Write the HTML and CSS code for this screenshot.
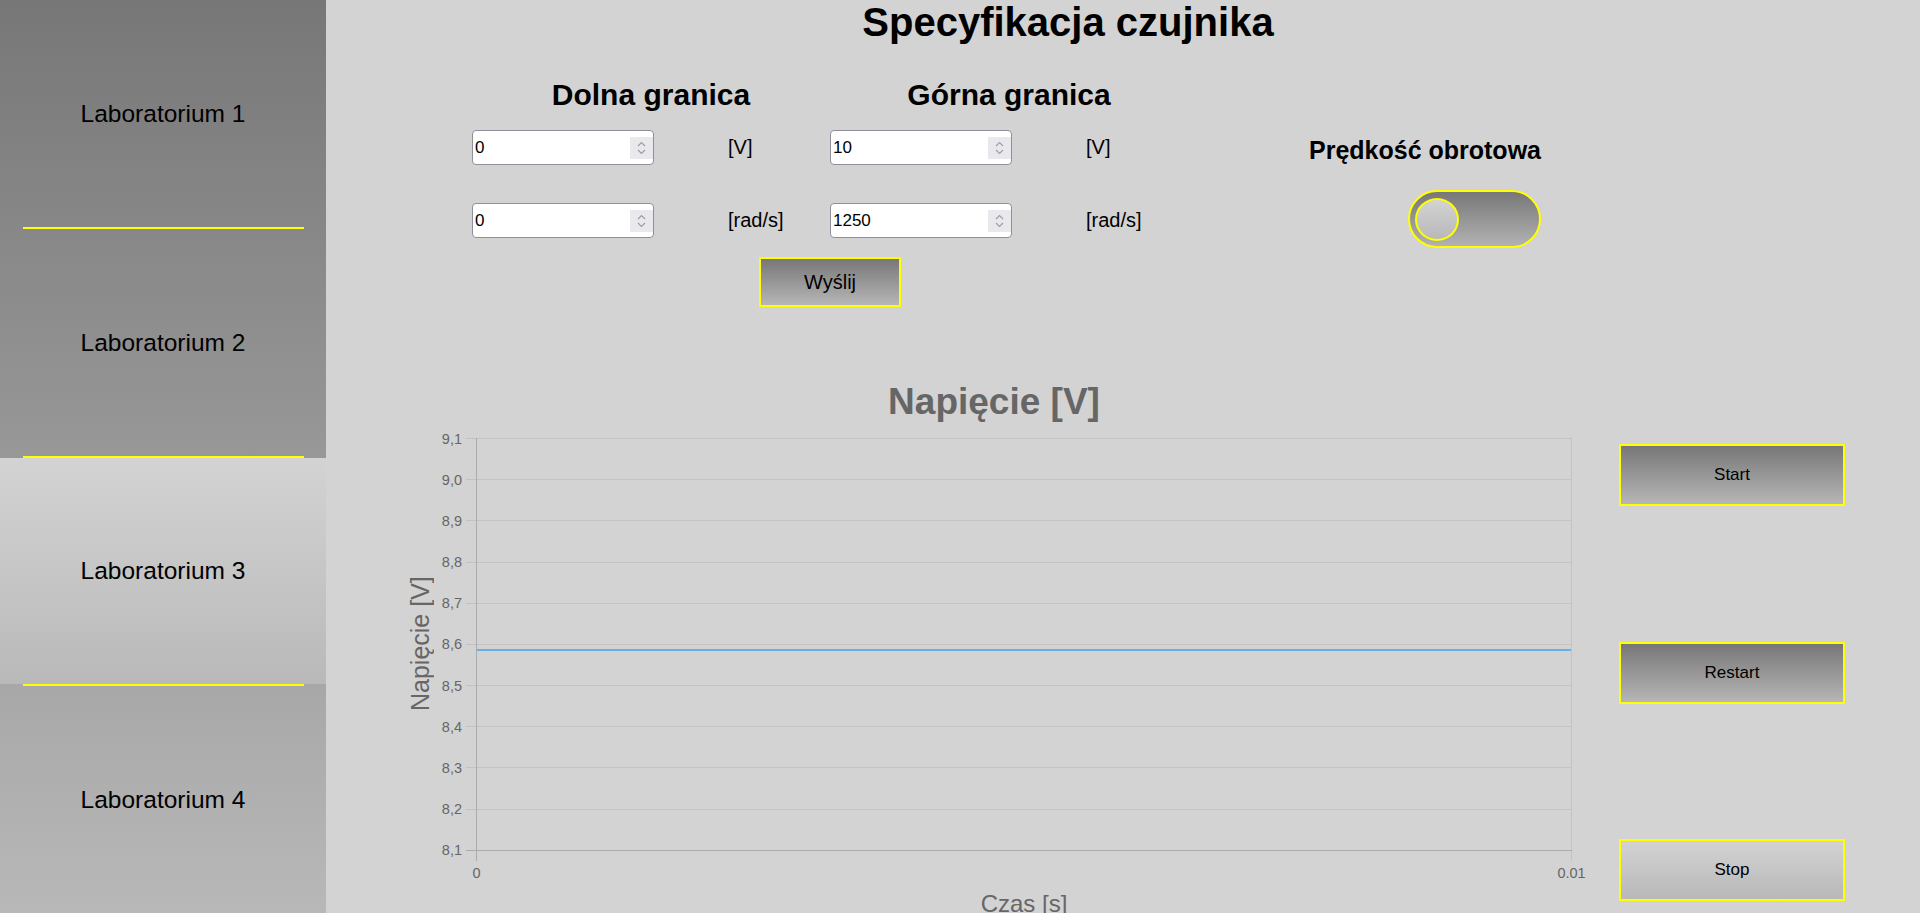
FILE: index.html
```html
<!DOCTYPE html>
<html lang="pl">
<head>
<meta charset="utf-8">
<title>Specyfikacja czujnika</title>
<link rel="stylesheet" href="styles.css">
</head>
<body>
<nav class="sidebar">
  <a class="nav-item" href="#">Laboratorium 1</a>
  <span class="nav-sep"></span>
  <a class="nav-item" href="#">Laboratorium 2</a>
  <span class="nav-sep"></span>
  <a class="nav-item active" href="#">Laboratorium 3</a>
  <span class="nav-sep"></span>
  <a class="nav-item" href="#">Laboratorium 4</a>
</nav>
<main class="main">
  <h1 class="title">Specyfikacja czujnika</h1>
  <section class="spec">
    <h2 class="col-head col1">Dolna granica</h2>
    <h2 class="col-head col2">Górna granica</h2>

    <div class="field col1 r2">
      <div class="num"><input type="text" value="0"><span class="spin"><svg width="23" height="22" viewBox="0 0 23 22"><path d="M8 9 L11.5 5.5 L15 9" /><path d="M8 13 L11.5 16.5 L15 13" /></svg></span></div>
      <span class="unit">[V]</span>
    </div>
    <div class="field col2 r2">
      <div class="num"><input type="text" value="10"><span class="spin"><svg width="23" height="22" viewBox="0 0 23 22"><path d="M8 9 L11.5 5.5 L15 9" /><path d="M8 13 L11.5 16.5 L15 13" /></svg></span></div>
      <span class="unit">[V]</span>
    </div>
    <h3 class="speed-head col3 r2">Prędkość obrotowa</h3>

    <div class="field col1 r3">
      <div class="num"><input type="text" value="0"><span class="spin"><svg width="23" height="22" viewBox="0 0 23 22"><path d="M8 9 L11.5 5.5 L15 9" /><path d="M8 13 L11.5 16.5 L15 13" /></svg></span></div>
      <span class="unit">[rad/s]</span>
    </div>
    <div class="field col2 r3">
      <div class="num"><input type="text" value="1250"><span class="spin"><svg width="23" height="22" viewBox="0 0 23 22"><path d="M8 9 L11.5 5.5 L15 9" /><path d="M8 13 L11.5 16.5 L15 13" /></svg></span></div>
      <span class="unit">[rad/s]</span>
    </div>
    <div class="switch col3 r3" role="switch" aria-checked="false"><span class="knob"></span></div>

    <button class="btn btn-dark send">Wyślij</button>
  </section>

  <section class="monitor">
    <div class="chart">
      <div class="chart-title">Napięcie [V]</div>
      <div class="chart-body">
        <div class="y-title">Napięcie [V]</div>
        <div class="y-ticks">
          <span>9,1</span><span>9,0</span><span>8,9</span><span>8,8</span><span>8,7</span><span>8,6</span><span>8,5</span><span>8,4</span><span>8,3</span><span>8,2</span><span>8,1</span>
        </div>
        <svg class="plot" width="1106" height="423" viewBox="0 0 1106 423">
          <g stroke="#c3c3c3" stroke-width="1">
            <line x1="0" y1="0.5" x2="1106" y2="0.5"/>
            <line x1="0" y1="41.5" x2="1106" y2="41.5"/>
            <line x1="0" y1="82.5" x2="1106" y2="82.5"/>
            <line x1="0" y1="124.5" x2="1106" y2="124.5"/>
            <line x1="0" y1="165.5" x2="1106" y2="165.5"/>
            <line x1="0" y1="206.5" x2="1106" y2="206.5"/>
            <line x1="0" y1="247.5" x2="1106" y2="247.5"/>
            <line x1="0" y1="288.5" x2="1106" y2="288.5"/>
            <line x1="0" y1="329.5" x2="1106" y2="329.5"/>
            <line x1="0" y1="371.5" x2="1106" y2="371.5"/>
            <line x1="1105.5" y1="0" x2="1105.5" y2="423"/>
          </g>
          <g stroke="#ababab" stroke-width="1">
            <line x1="0" y1="412.5" x2="1106" y2="412.5"/>
            <line x1="10.5" y1="0" x2="10.5" y2="423"/>
          </g>
          <line x1="11" y1="212" x2="1105" y2="212" stroke="#64b1e8" stroke-width="2"/>
        </svg>
      </div>
      <div class="x-ticks"><span>0</span><span>0.01</span></div>
      <div class="x-title">Czas [s]</div>
    </div>
    <div class="controls">
      <button class="btn btn-dark ctl">Start</button>
      <button class="btn btn-dark ctl">Restart</button>
      <button class="btn btn-light ctl">Stop</button>
    </div>
  </section>
</main>
</body>
</html>
```
FILE: styles.css
```css
* { box-sizing: border-box; }

html, body {
  margin: 0;
  height: 100%;
}

body {
  display: flex;
  height: 100vh;
  overflow: hidden;
  background: #d3d3d3;
  font-family: "Liberation Sans", Arial, sans-serif;
  font-size: 20px;
  color: #000;
}

/* ---------- sidebar ---------- */
.sidebar {
  width: 326px;
  flex: 0 0 326px;
  display: flex;
  flex-direction: column;
  background: linear-gradient(to bottom, #777777, #b8b8b8);
}

.nav-item {
  flex: 1;
  display: flex;
  align-items: center;
  justify-content: center;
  padding-top: 1px;
  font-size: 24.5px;
  color: #000;
  text-decoration: none;
}

.nav-item.active {
  background: linear-gradient(to bottom, #d3d3d3, #b9b9b9);
}

.nav-sep {
  display: block;
  height: 2px;
  margin: 0 22px 0 23px;
  background: #ffff00;
  flex: 0 0 2px;
}

/* ---------- main ---------- */
.main {
  flex: 1;
  display: flex;
  flex-direction: column;
  min-width: 0;
}

.title {
  margin: 0;
  padding-right: 110px;
  font-size: 40px;
  line-height: 44px;
  font-weight: bold;
  text-align: center;
}

.spec {
  display: grid;
  grid-template-columns: 358px 358px 353px;
  grid-template-rows: 69px 52px 83px 59px;
  align-items: end;
  margin-left: 146px;
}

.col1 { grid-column: 1; }
.col2 { grid-column: 2; }
.col3 { grid-column: 3; justify-self: end; }
.r2 { grid-row: 2; }
.r3 { grid-row: 3; }

.col-head {
  grid-row: 1;
  margin: 0;
  font-size: 30px;
  line-height: 36px;
  font-weight: bold;
  text-align: center;
}

.field {
  display: flex;
  align-items: center;
  gap: 74px;
  height: 58px;
}
.field.r2 { height: 35px; }
.field.r3 { padding-top: 3px; }

.num {
  width: 182px;
  height: 35px;
  display: flex;
  align-items: center;
  background: #fff;
  border: 1px solid #8f8f9d;
  border-radius: 4px;
}

.num input {
  flex: 1;
  min-width: 0;
  height: 100%;
  border: none;
  outline: none;
  background: transparent;
  padding: 0 0 0 2px;
  font-family: "Liberation Sans", Arial, sans-serif;
  font-size: 17px;
  color: #000;
}

.spin {
  width: 23px;
  height: 22px;
  background: #e9e9ed;
  display: flex;
}

.spin svg path {
  fill: none;
  stroke: #9d9da6;
  stroke-width: 1.2;
}

.unit {
  font-size: 20px;
  line-height: 24px;
  margin-top: -1px;
}

.speed-head {
  margin: 0;
  font-size: 25px;
  line-height: 30px;
  font-weight: bold;
}

.switch {
  width: 133px;
  height: 58px;
  border: 2px solid #ffff00;
  border-radius: 29px;
  background: linear-gradient(to bottom, #777777, #b2b2b2);
  display: flex;
  align-items: center;
  padding-left: 5px;
}

.knob {
  width: 44px;
  height: 43px;
  border: 2px solid #ffff00;
  border-radius: 50%;
  background: linear-gradient(to bottom, #d3d3d3, #b8b8b8);
}

.btn {
  border: 2px solid #ffff00;
  border-radius: 0;
  font-family: "Liberation Sans", Arial, sans-serif;
  color: #000;
  padding: 0;
  cursor: pointer;
}

.btn-dark { background: linear-gradient(to bottom, #777777, #b6b6b6); }
.btn-light { background: linear-gradient(to bottom, #d3d3d3, #b8b8b8); }

.send {
  grid-row: 4;
  grid-column: 1 / 3;
  justify-self: center;
  width: 142px;
  height: 50px;
  font-size: 20px;
}

/* ---------- chart ---------- */
.monitor {
  display: flex;
  align-items: flex-start;
  margin-top: 73px;
  margin-left: 74px;
}

.chart {
  width: 1188px;
  flex: 0 0 1188px;
  display: flex;
  flex-direction: column;
  color: #666;
}

.chart-title {
  font-size: 37px;
  line-height: 44px;
  font-weight: bold;
  text-align: center;
}

.chart-body {
  display: flex;
  align-items: flex-start;
  margin-top: 14px;
}

.y-title {
  width: 40px;
  height: 412px;
  writing-mode: vertical-rl;
  transform: rotate(180deg);
  text-align: center;
  font-size: 25px;
  line-height: 40px;
}

.y-ticks {
  width: 22px;
  height: 412px;
  margin: 0.5px 4px 0 0;
  display: flex;
  flex-direction: column;
  justify-content: space-between;
  font-size: 14.5px;
}

.y-ticks span {
  height: 0;
  display: flex;
  align-items: center;
  justify-content: flex-end;
  white-space: nowrap;
}

.plot {
  display: block;
  flex: 0 0 auto;
}

.x-ticks {
  display: flex;
  justify-content: space-between;
  margin: 11.5px 0 0 76.5px;
  width: 1095px;
  height: 0;
  font-size: 14.5px;
}

.x-ticks span {
  width: 0;
  height: 0;
  display: flex;
  align-items: center;
  justify-content: center;
  white-space: nowrap;
}

.x-title {
  margin: 17px 0 0 76px;
  width: 1096px;
  text-align: center;
  font-size: 24px;
  line-height: 28px;
}

/* ---------- control buttons ---------- */
.controls {
  width: 226px;
  height: 457px;
  margin: 64px 0 0 31px;
  display: flex;
  flex-direction: column;
  justify-content: space-between;
}

.ctl {
  width: 226px;
  height: 62px;
  font-size: 17px;
}
```
